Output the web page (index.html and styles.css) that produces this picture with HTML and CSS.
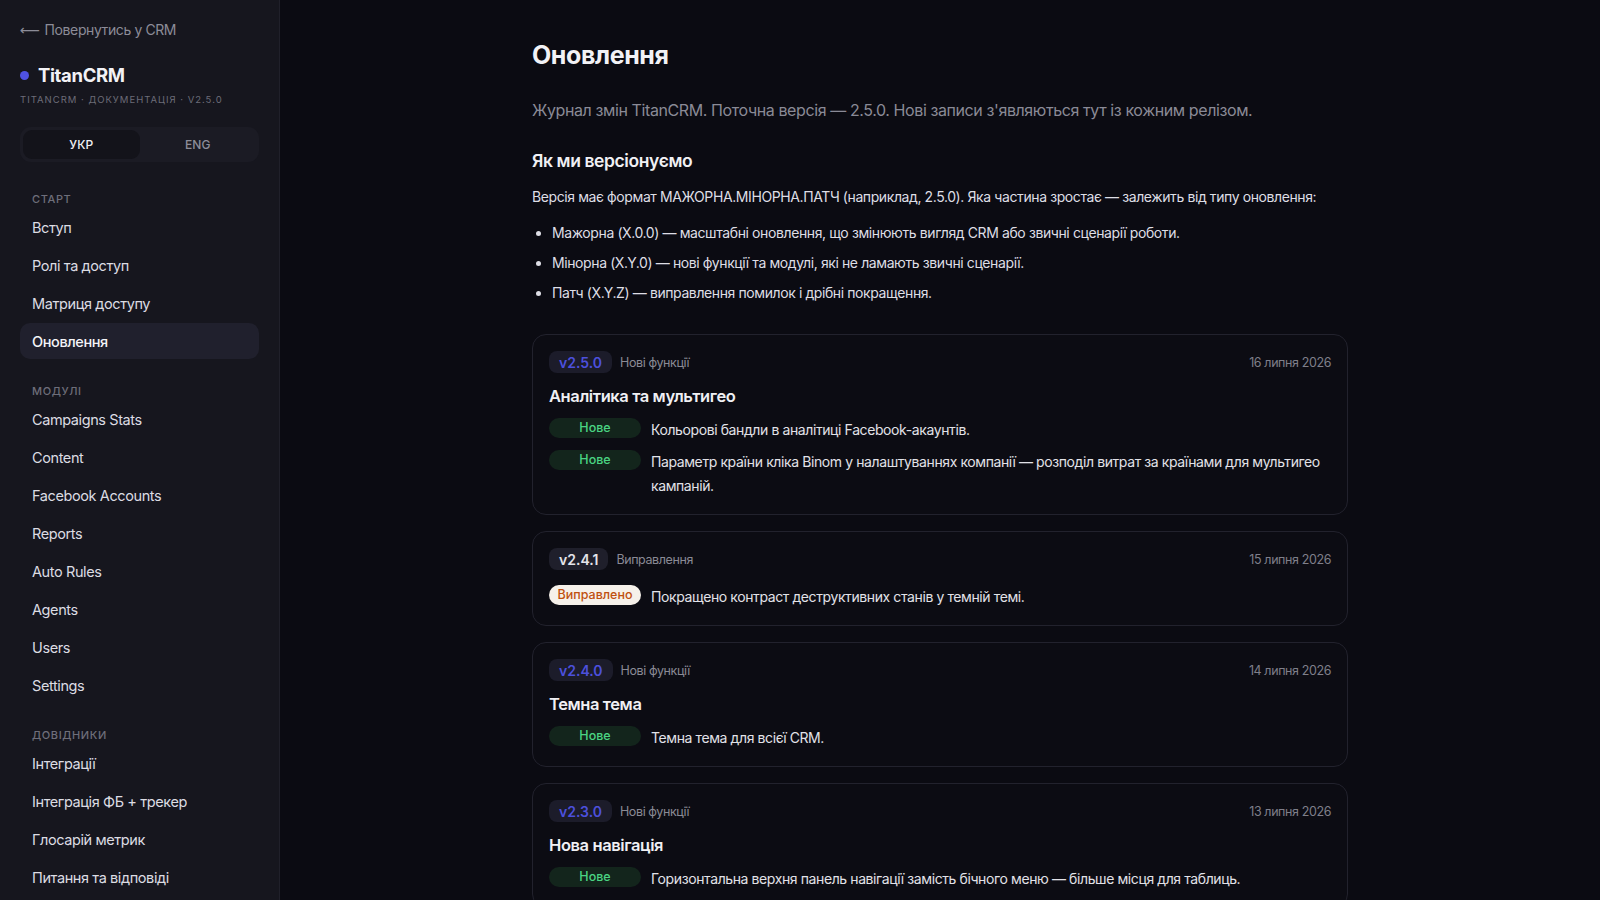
FILE: index.html
```html
<!DOCTYPE html>
<html lang="uk">
<head>
<meta charset="utf-8">
<title>Оновлення — TitanCRM</title>
<link rel="stylesheet" href="styles.css">
</head>
<body>
<div class="layout">
  <aside class="sidebar">
    <a class="back" href="#"><span class="arrow">⟵</span> Повернутись у CRM</a>
    <div class="brand"><span class="dot"></span>TitanCRM</div>
    <div class="brand-sub">TitanCRM · Документація · v2.5.0</div>
    <div class="lang">
      <button class="lang-btn active">УКР</button>
      <button class="lang-btn">ENG</button>
    </div>

    <div class="nav-label first">Старт</div>
    <a class="nav-item" href="#">Вступ</a>
    <a class="nav-item" href="#">Ролі та доступ</a>
    <a class="nav-item" href="#">Матриця доступу</a>
    <a class="nav-item active" href="#">Оновлення</a>

    <div class="nav-label">Модулі</div>
    <a class="nav-item" href="#">Campaigns Stats</a>
    <a class="nav-item" href="#">Content</a>
    <a class="nav-item" href="#">Facebook Accounts</a>
    <a class="nav-item" href="#">Reports</a>
    <a class="nav-item" href="#">Auto Rules</a>
    <a class="nav-item" href="#">Agents</a>
    <a class="nav-item" href="#">Users</a>
    <a class="nav-item" href="#">Settings</a>

    <div class="nav-label">Довідники</div>
    <a class="nav-item" href="#">Інтеграції</a>
    <a class="nav-item" href="#">Інтеграція ФБ + трекер</a>
    <a class="nav-item" href="#">Глосарій метрик</a>
    <a class="nav-item" href="#">Питання та відповіді</a>
  </aside>

  <main class="main">
    <div class="content">
      <h1 class="title">Оновлення</h1>
      <p class="lead">Журнал змін TitanCRM. Поточна версія — 2.5.0. Нові записи з'являються тут із кожним релізом.</p>

      <h2 class="subtitle">Як ми версіонуємо</h2>
      <p class="text">Версія має формат МАЖОРНА.МІНОРНА.ПАТЧ (наприклад, 2.5.0). Яка частина зростає — залежить від типу оновлення:</p>
      <ul class="list">
        <li>Мажорна (X.0.0) — масштабні оновлення, що змінюють вигляд CRM або звичні сценарії роботи.</li>
        <li>Мінорна (X.Y.0) — нові функції та модулі, які не ламають звичні сценарії.</li>
        <li>Патч (X.Y.Z) — виправлення помилок і дрібні покращення.</li>
      </ul>

      <section class="card">
        <div class="card-head">
          <span class="ver ver-feature">v2.5.0</span>
          <span class="cat">Нові функції</span>
          <span class="date">16 липня 2026</span>
        </div>
        <h3 class="card-title">Аналітика та мультигео</h3>
        <div class="entry"><span class="tag tag-new">Нове</span><span class="entry-text">Кольорові бандли в аналітиці Facebook-акаунтів.</span></div>
        <div class="entry"><span class="tag tag-new">Нове</span><span class="entry-text">Параметр країни кліка Binom у налаштуваннях компанії — розподіл витрат за країнами для мультигео кампаній.</span></div>
      </section>

      <section class="card">
        <div class="card-head">
          <span class="ver ver-fix">v2.4.1</span>
          <span class="cat">Виправлення</span>
          <span class="date">15 липня 2026</span>
        </div>
        <div class="entry"><span class="tag tag-fix">Виправлено</span><span class="entry-text">Покращено контраст деструктивних станів у темній темі.</span></div>
      </section>

      <section class="card">
        <div class="card-head">
          <span class="ver ver-feature">v2.4.0</span>
          <span class="cat">Нові функції</span>
          <span class="date">14 липня 2026</span>
        </div>
        <h3 class="card-title">Темна тема</h3>
        <div class="entry"><span class="tag tag-new">Нове</span><span class="entry-text">Темна тема для всієї CRM.</span></div>
      </section>

      <section class="card">
        <div class="card-head">
          <span class="ver ver-feature">v2.3.0</span>
          <span class="cat">Нові функції</span>
          <span class="date">13 липня 2026</span>
        </div>
        <h3 class="card-title">Нова навігація</h3>
        <div class="entry"><span class="tag tag-new">Нове</span><span class="entry-text">Горизонтальна верхня панель навігації замість бічного меню — більше місця для таблиць.</span></div>
      </section>
    </div>
  </main>
</div>
</body>
</html>
```

FILE: styles.css
```css
* { box-sizing: border-box; }

html, body {
  margin: 0;
  height: 100%;
}

body {
  background: #0b0b12;
  color: #e6e6ec;
  font-family: "Inter", "Noto Sans", "DejaVu Sans", sans-serif;
  letter-spacing: -0.025em;
  -webkit-font-smoothing: antialiased;
}

a { text-decoration: none; color: inherit; }

.layout {
  display: flex;
  height: 100vh;
  overflow: hidden;
}

/* Sidebar */
.sidebar {
  width: 280px;
  flex: 0 0 280px;
  background: #16161e;
  border-right: 1px solid #20202a;
  padding: 20px 20px 0 20px;
  display: flex;
  flex-direction: column;
  overflow: hidden;
}

.back {
  font-size: 14px;
  line-height: 20px;
  color: #8c8c98;
}
.back .arrow { margin-right: 1px; font-family: "DejaVu Sans", sans-serif; letter-spacing: 0; }

.brand {
  display: flex;
  align-items: center;
  gap: 9px;
  margin-top: 23px;
  font-size: 18.5px;
  font-weight: 700;
  line-height: 24px;
  color: #f2f2f6;
  letter-spacing: -0.02em;
}
.dot {
  width: 9px;
  height: 9px;
  border-radius: 50%;
  background: #4f52e3;
}

.brand-sub {
  margin-top: 6px;
  font-size: 9.5px;
  line-height: 14px;
  text-transform: uppercase;
  letter-spacing: 1px;
  color: #6c6c78;
}

.lang {
  margin-top: 20px;
  display: grid;
  grid-template-columns: 1fr 1fr;
  padding: 3px;
  background: #1b1b24;
  border-radius: 11px;
  height: 35px;
}
.lang-btn {
  border: 0;
  background: transparent;
  color: #8d8d99;
  font-family: inherit;
  font-size: 12px;
  font-weight: 500;
  border-radius: 9px;
  cursor: pointer;
}
.lang-btn.active {
  background: #13131a;
  color: #f0f0f4;
}

.nav-label {
  margin-top: 23px;
  margin-bottom: 3px;
  padding-left: 12px;
  font-size: 11px;
  line-height: 14px;
  font-weight: 500;
  text-transform: uppercase;
  letter-spacing: 0.6px;
  color: #6e6e7a;
}
.nav-label.first { margin-top: 30px; }

.nav-item {
  display: flex;
  align-items: center;
  height: 36px;
  margin-bottom: 2px;
  padding: 0 12px;
  border-radius: 10px;
  font-size: 14.5px;
  color: #dcdce3;
}
.nav-item.active {
  background: #20202d;
  color: #f4f4f8;
  font-weight: 500;
}

/* Main */
.main {
  flex: 1;
  overflow: hidden;
  padding: 39px 32px 40px;
}
.content {
  max-width: 816px;
  margin: 0 auto;
}

.title {
  margin: 0;
  font-size: 25px;
  line-height: 32px;
  font-weight: 700;
  color: #f2f2f6;
}

.lead {
  margin: 27px 0 0;
  font-size: 16px;
  line-height: 24px;
  color: #8a8a96;
}

.subtitle {
  margin: 27px 0 0;
  font-size: 17.5px;
  line-height: 24px;
  font-weight: 600;
  color: #f0f0f4;
}

.text {
  margin: 13px 0 0;
  font-size: 14px;
  line-height: 22px;
  color: #dedee5;
}

.list {
  margin: 14px 0 0;
  padding-left: 20px;
  font-size: 14px;
  line-height: 22px;
  color: #dedee5;
}
.list li { margin-bottom: 8px; }
.list li:last-child { margin-bottom: 0; }

.card {
  margin-top: 16px;
  border: 1px solid #22222d;
  border-radius: 14px;
  padding: 16px;
  background: #0c0c13;
}
.list + .card { margin-top: 30px; }

.card-head {
  display: flex;
  align-items: center;
  gap: 8px;
  height: 22px;
}
.ver {
  display: inline-flex;
  align-items: center;
  height: 22px;
  padding: 0 10px;
  border-radius: 8px;
  font-size: 14px;
  font-weight: 600;
  letter-spacing: 0;
  background: #1c1c2a;
}
.ver-feature { color: #4c50dc; }
.ver-fix { color: #e4e4ea; background: #1f1f2b; }

.cat {
  font-size: 12.5px;
  color: #8a8a95;
}
.date {
  margin-left: auto;
  font-size: 12.5px;
  color: #7f7f8a;
}

.card-title {
  margin: 11px 0 0;
  font-size: 16.5px;
  line-height: 24px;
  font-weight: 600;
  color: #f0f0f4;
}

.entry {
  display: flex;
  align-items: flex-start;
  gap: 10px;
  margin-top: 10px;
  font-size: 14px;
  line-height: 24px;
  color: #e2e2e8;
}
.card-head + .entry { margin-top: 15px; }
.entry + .entry { margin-top: 8px; }

.tag {
  flex: 0 0 92px;
  height: 20px;
  display: inline-flex;
  align-items: center;
  justify-content: center;
  border-radius: 10px;
  font-size: 12.5px;
  font-weight: 500;
  letter-spacing: 0;
}
.tag-new {
  background: #13251c;
  color: #4ad483;
}
.tag-fix {
  background: #f6f1ea;
  color: #c0500f;
}
.entry-text { flex: 1; }
```
